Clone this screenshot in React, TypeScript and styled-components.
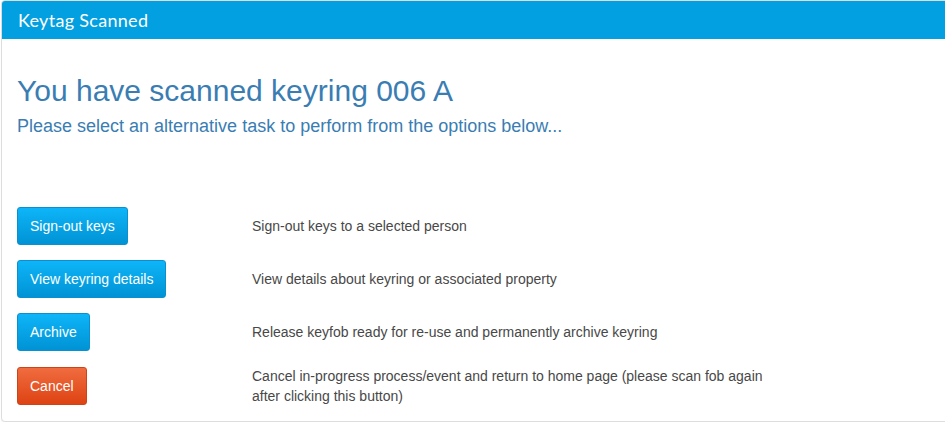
import React from "react";
import styled, { createGlobalStyle, css } from "styled-components";

const GlobalStyle = createGlobalStyle`
  html, body {
    margin: 0;
    padding: 0;
    background: #ffffff;
    overflow: hidden;
  }
  body {
    font-family: "Liberation Sans", Arial, sans-serif;
    font-size: 14px;
    line-height: 1.42857;
    color: #444444;
  }
  * { box-sizing: border-box; }
`;

const Panel = styled.section`
  margin: 0 -6px 0 1px;
  border: 1px solid #dddddd;
  border-radius: 4px;
  background: #ffffff;
  box-shadow: 0 1px 1px rgba(0, 0, 0, 0.05);
`;

const PanelHeading = styled.header`
  background: #02a0e1;
  color: #ffffff;
  padding: 10px 16px;
  height: 38px;
  border-top-left-radius: 3px;
  border-top-right-radius: 3px;
  font-family: Lato, "Open Sans", sans-serif;
  font-size: 18px;
  line-height: 18px;
  letter-spacing: 0.3px;
`;

const PanelBody = styled.div`
  padding: 15px;
`;

const Title = styled.h2`
  margin: 20px 0 10px;
  font-family: "Liberation Sans", Arial, sans-serif;
  font-size: 30px;
  font-weight: 400;
  line-height: 1.1;
  color: #3a7db3;
`;

const Subtitle = styled.h4`
  margin: 10px 0 70px;
  font-family: "Liberation Sans", Arial, sans-serif;
  font-size: 18px;
  font-weight: 400;
  line-height: 1.1;
  color: #3a7db3;
`;

const Options = styled.div`
  display: flex;
  flex-direction: column;
  gap: 15px;
`;

const OptionRow = styled.div`
  display: grid;
  grid-template-columns: 235px 1fr;
  align-items: center;
`;

const ButtonCell = styled.div`
  display: flex;
`;

const variants = {
  primary: css`
    background: linear-gradient(to bottom, #0db5f8 0%, #0093d5 100%);
    border-color: #0a8fcf;
  `,
  danger: css`
    background: linear-gradient(to bottom, #f06c3f 0%, #de4313 100%);
    border-color: #cf4318;
  `,
};

const ActionButton = styled.button<{ $variant: "primary" | "danger" }>`
  font-family: "Liberation Sans", Arial, sans-serif;
  font-size: 14px;
  line-height: 20px;
  height: 38px;
  padding: 8px 12px;
  border: 1px solid transparent;
  border-radius: 3px;
  color: #ffffff;
  cursor: pointer;
  white-space: nowrap;
  ${(p) => variants[p.$variant]}
`;

const Description = styled.div`
  max-width: 540px;
  font-size: 14px;
  line-height: 20px;
  color: #484848;
`;

const options: { label: string; variant: "primary" | "danger"; text: string }[] = [
  { label: "Sign-out keys", variant: "primary", text: "Sign-out keys to a selected person" },
  { label: "View keyring details", variant: "primary", text: "View details about keyring or associated property" },
  { label: "Archive", variant: "primary", text: "Release keyfob ready for re-use and permanently archive keyring" },
  {
    label: "Cancel",
    variant: "danger",
    text: "Cancel in-progress process/event and return to home page (please scan fob again after clicking this button)",
  },
];

export default function App() {
  return (
    <>
      <GlobalStyle />
      <Panel>
        <PanelHeading>Keytag Scanned</PanelHeading>
        <PanelBody>
          <Title>You have scanned keyring 006 A</Title>
          <Subtitle>Please select an alternative task to perform from the options below...</Subtitle>
          <Options>
            {options.map((o) => (
              <OptionRow key={o.label}>
                <ButtonCell>
                  <ActionButton $variant={o.variant}>{o.label}</ActionButton>
                </ButtonCell>
                <Description>{o.text}</Description>
              </OptionRow>
            ))}
          </Options>
        </PanelBody>
      </Panel>
    </>
  );
}
